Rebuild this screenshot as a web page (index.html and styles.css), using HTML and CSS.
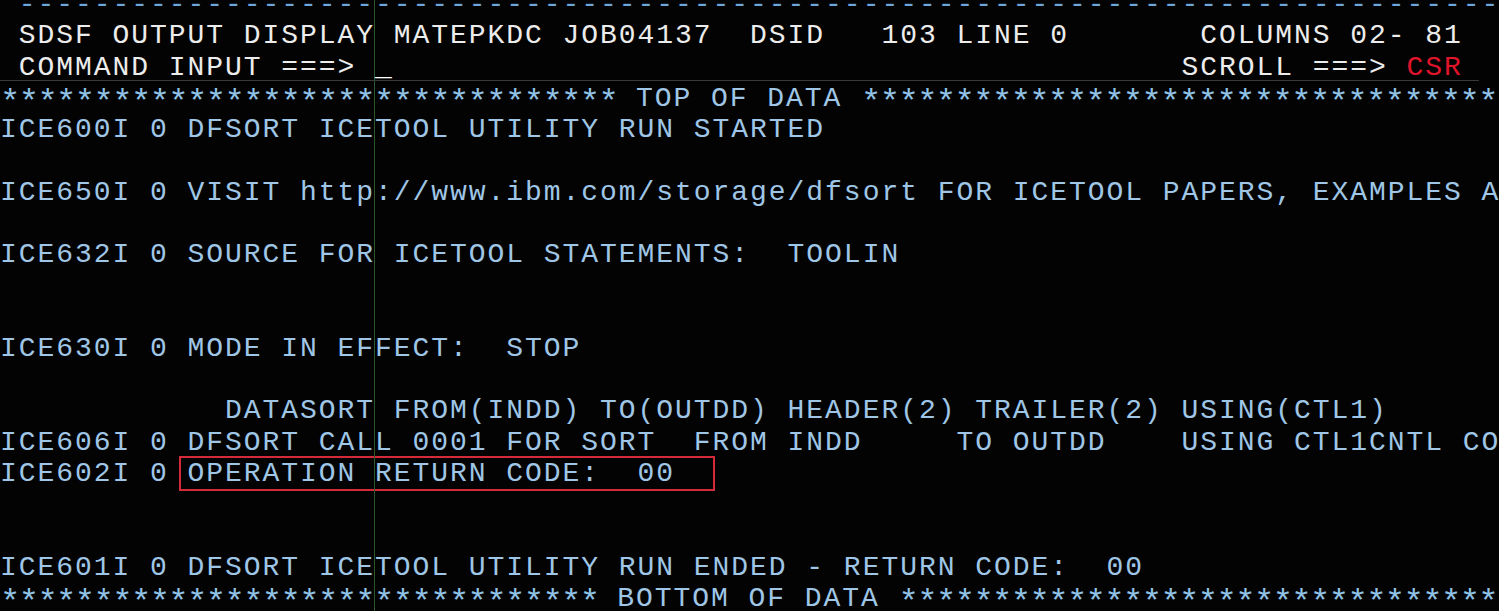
FILE: index.html
```html
<!DOCTYPE html>
<html lang="en">
<head>
    <meta charset="UTF-8">
    <title>SDSF Output Display</title>
    <link rel="stylesheet" href="styles.css">
</head>
<body>
    <div class="screen">
        <!-- crosshair column marker -->
        <div class="crosshair"></div>

        <div class="row dashes"> -------------------------------------------------------------------------------</div>
        <div class="row head"> SDSF OUTPUT DISPLAY MATEPKDC JOB04137  DSID   103 LINE 0       COLUMNS 02- 81</div>
        <div class="row head cmd"> COMMAND INPUT ===> <span class="cursor">_</span>                                          SCROLL ===> <span class="red">CSR</span></div>
        <div class="row stars"><span class="ast">*********************************</span> TOP OF DATA <span class="ast">**********************************</span></div>
        <div class="row">ICE600I 0 DFSORT ICETOOL UTILITY RUN STARTED</div>
        <div class="row"> </div>
        <div class="row">ICE650I 0 VISIT http://www.ibm.com/storage/dfsort FOR ICETOOL PAPERS, EXAMPLES A</div>
        <div class="row"> </div>
        <div class="row">ICE632I 0 SOURCE FOR ICETOOL STATEMENTS:  TOOLIN</div>
        <div class="row"> </div>
        <div class="row"> </div>
        <div class="row">ICE630I 0 MODE IN EFFECT:  STOP</div>
        <div class="row"> </div>
        <div class="row">            DATASORT FROM(INDD) TO(OUTDD) HEADER(2) TRAILER(2) USING(CTL1)</div>
        <div class="row">ICE606I 0 DFSORT CALL 0001 FOR SORT  FROM INDD     TO OUTDD    USING CTL1CNTL CO</div>
        <div class="row">ICE602I 0 <span class="mark">OPERATION RETURN CODE:  00  </span></div>
        <div class="row"> </div>
        <div class="row"> </div>
        <div class="row">ICE601I 0 DFSORT ICETOOL UTILITY RUN ENDED - RETURN CODE:  00</div>
        <div class="row stars"><span class="ast">********************************</span> BOTTOM OF DATA <span class="ast">********************************</span></div>
    </div>
</body>
</html>
```

FILE: styles.css
```css
/* Terminal screen */
body {
    margin: 0;
    background-color: #030303;
    overflow: hidden;
}

.screen {
    position: relative;
    margin-top: -11px;
    font-family: 'Liberation Mono', 'DejaVu Sans Mono', monospace;
    font-size: 28px;
    letter-spacing: 1.95px;
    color: #9fc6e6;
}

.row {
    height: 31.28px;
    line-height: 31.28px;
    white-space: pre;
}

.dashes {
    color: #6fa6da;
}

.head {
    color: #ececec;
}

.cmd {
    position: relative;
}

/* thin rule under the command line */
.cmd::after {
    content: '';
    position: absolute;
    left: 0;
    right: 20px;
    bottom: 2px;
    height: 1px;
    background: #3a3a3a;
}

.cursor {
    color: #ffffff;
}

.red {
    color: #e0142a;
}

.stars {
    color: #9fc6e6;
}

/* bigger asterisks, same column width */
.ast {
    font-size: 34px;
    letter-spacing: -1.7px;
    vertical-align: -6px;
    line-height: 0;
    color: #8fc2e6;
}

.mark {
    margin-left: -7px;
    padding-left: 7px;
    outline: 2px solid #d42a3a;
}

/* green vertical line over the screen */
.crosshair {
    position: absolute;
    left: 374px;
    top: 0;
    width: 1px;
    height: 700px;
    background: #2b572b;
}
```
